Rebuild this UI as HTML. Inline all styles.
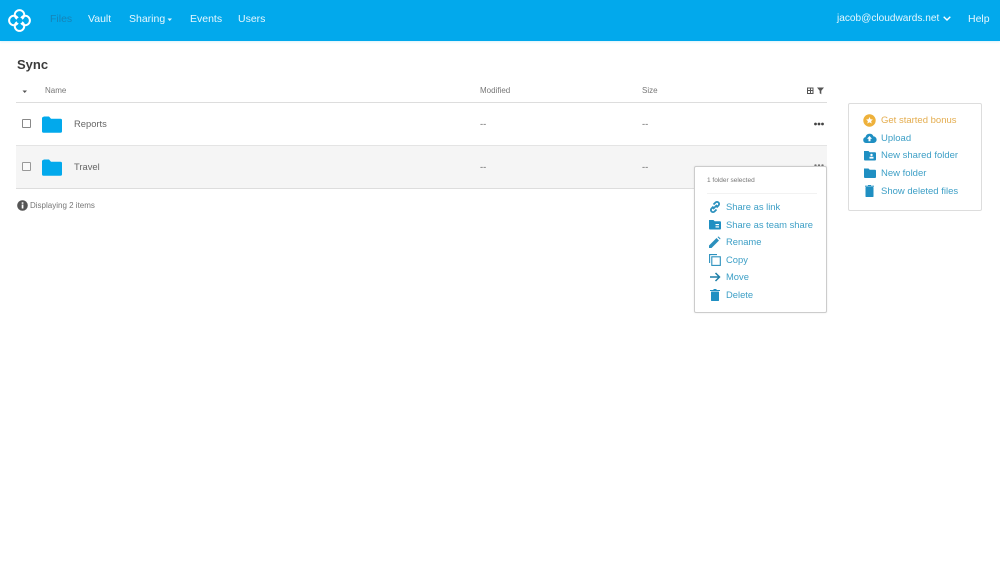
<!DOCTYPE html>
<html><head><meta charset="utf-8"><style>
html,body{margin:0;padding:0;background:#fff}
body{width:1000px;height:566px;overflow:hidden;position:relative;font-family:"Liberation Sans",sans-serif}
.t{position:absolute;white-space:nowrap;line-height:14px}
.b{position:absolute}
.nav{font-size:10.5px;color:#e6f7fe;top:12px}
.h{font-size:8px;color:#777;top:84px}
.g{font-size:9.4px;color:#666}
.l{font-size:9.5px;color:#3d9fc6}
svg{position:absolute;overflow:visible}
</style></head><body>
<div class="b" style="left:0;top:0;width:1000px;height:41px;background:#02a9ec;box-shadow:0 1px 2px rgba(2,169,236,.15)"></div>
<svg style="left:7px;top:8px" width="25" height="25" viewBox="0 0 25 25" fill="none" stroke="#fff" stroke-width="2"><circle cx="12.500" cy="6.800" r="4.700"/><circle cx="12.500" cy="18.200" r="4.700"/><circle cx="6.800" cy="12.500" r="4.700"/><circle cx="18.200" cy="12.500" r="4.700"/><circle cx="12.500" cy="12.500" r="3" fill="#02a9ec" stroke="none"/></svg>
<div class="t nav" style="left:50px;color:#1584b8">Files</div>
<div class="t nav" style="left:88px">Vault</div>
<div class="t nav" style="left:129px">Sharing</div>
<svg style="left:167px;top:18px" width="6" height="4"><path d="M0.500 0.500H5L2.700 3z" fill="#e6f7fe"/></svg>
<div class="t nav" style="left:190px">Events</div>
<div class="t nav" style="left:238px">Users</div>
<div class="t nav" style="left:837px;font-size:10.100px">jacob@cloudwards.net</div>
<svg style="left:943px;top:16px" width="8" height="6" fill="none" stroke="#fff" stroke-width="1.400"><path d="M0.700 0.800L4 4L7.300 0.800"/></svg>
<div class="t nav" style="left:968px">Help</div>

<div class="t" style="left:17px;top:57px;font-size:13px;font-weight:bold;color:#3c3c3c;line-height:15px">Sync</div>
<svg style="left:22px;top:90px" width="6" height="4"><path d="M0.500 0.500H5L2.700 3z" fill="#555"/></svg>
<div class="t h" style="left:45px">Name</div>
<div class="t h" style="left:480px">Modified</div>
<div class="t h" style="left:642px">Size</div>
<svg style="left:807px;top:87px" width="18" height="8"><path d="M0 0.500h6.500v6.500h-6.500z M1 1.500v1.500h2v-1.500z M4 1.500v1.500h1.500v-1.500z M1 4v2h2v-2z M4 4v2h1.500v-2z" fill="#555" fill-rule="evenodd"/><path d="M10 0.500h7l-2.700 3.200v3.500l-1.600-1v-2.500z" fill="#555"/></svg>
<div class="b" style="left:16px;top:102px;width:811px;height:1px;background:#ddd"></div>

<div class="b" style="left:22px;top:119px;width:7px;height:7px;border:1px solid #888;border-radius:1px"></div>
<svg style="left:42px;top:116px" width="20" height="17"><path d="M1.500 0.500h5.500l2 2.300h9.500a1.500 1.500 0 0 1 1.500 1.500v11a1.500 1.500 0 0 1-1.500 1.500h-17a1.500 1.500 0 0 1-1.500-1.500v-13.500a1.500 1.500 0 0 1 1.500-.8z" fill="#02a9ec"/></svg>
<div class="t g" style="left:74px;top:117px">Reports</div>
<div class="t g" style="left:480px;top:117px">--</div>
<div class="t g" style="left:642px;top:117px">--</div>
<svg style="left:814px;top:122px" width="10" height="4" fill="#444"><circle cx="1.500" cy="2" r="1.400"/><circle cx="5" cy="2" r="1.400"/><circle cx="8.500" cy="2" r="1.400"/></svg>
<div class="b" style="left:16px;top:145px;width:811px;height:42px;background:#f5f5f5;border-top:1px solid #e4e4e4;border-bottom:1px solid #ddd"></div>

<div class="b" style="left:22px;top:162px;width:7px;height:7px;border:1px solid #999;border-radius:1px;background:#fafafa"></div>
<svg style="left:42px;top:158.500px" width="20" height="17"><path d="M1.500 0.500h5.500l2 2.300h9.500a1.500 1.500 0 0 1 1.500 1.500v11a1.500 1.500 0 0 1-1.500 1.500h-17a1.500 1.500 0 0 1-1.500-1.500v-13.500a1.500 1.500 0 0 1 1.500-.8z" fill="#02a9ec"/></svg>
<div class="t g" style="left:74px;top:159.500px">Travel</div>
<div class="t g" style="left:480px;top:159.500px">--</div>
<div class="t g" style="left:642px;top:159.500px">--</div>

<svg style="left:17px;top:200px" width="11" height="11"><circle cx="5.500" cy="5.500" r="5.300" fill="#555"/><rect x="4.700" y="4.500" width="1.700" height="4" fill="#fff"/><rect x="4.700" y="2.300" width="1.700" height="1.500" fill="#fff"/></svg>
<div class="t" style="left:30px;top:199px;font-size:8px;color:#777">Displaying 2 items</div>

<svg style="left:814px;top:164px" width="10" height="3" fill="#777"><circle cx="1.500" cy="1.500" r="1.200"/><circle cx="5" cy="1.500" r="1.200"/><circle cx="8.500" cy="1.500" r="1.200"/></svg>
<div class="b" style="left:694px;top:166px;width:131px;height:145px;background:#fff;border:1px solid #ccc;border-radius:2px;box-shadow:0 0 2px rgba(0,0,0,.08)"></div>
<div class="t" style="left:707px;top:174px;font-size:6.500px;color:#777">1 folder selected</div>
<div class="b" style="left:707px;top:193px;width:110px;height:1px;background:#f2f2f2"></div>

<svg style="left:709px;top:201px" width="12" height="12" fill="none" stroke="#2b90bd" stroke-width="1.800"><path d="M4 8l4-4M4.500 5.500l-2 2a2 2 0 0 0 3 3l2-2M7.500 6.500l2-2a2 2 0 0 0-3-3l-2 2"/></svg>
<div class="t l" style="left:726px;top:200px;font-size:9.400px">Share as link</div>
<svg style="left:709px;top:219px" width="12" height="11"><path d="M0 1h4.500l1.200 1.300h5.300a1 1 0 0 1 1 1v6.200a1 1 0 0 1-1 1h-10a1 1 0 0 1-1-1z" fill="#1f8fc2"/><rect x="6.500" y="5" width="3.500" height="1.200" fill="#fff"/><rect x="6.500" y="7.300" width="3.500" height="1.200" fill="#fff"/></svg>
<div class="t l" style="left:726px;top:218px;font-size:9.400px">Share as team share</div>
<svg style="left:709px;top:237px" width="12" height="11"><path d="M0 11v-2.500l7.500-7.500 2.500 2.500-7.500 7.500z M8.500 0l1-.5 2 2-.5 1z" fill="#2b90bd"/></svg>
<div class="t l" style="left:726px;top:235px;font-size:9.400px">Rename</div>
<svg style="left:709px;top:254px" width="12" height="12" fill="none" stroke="#2b90bd" stroke-width="1.100"><path d="M.6 9V.6H8"/><rect x="2.800" y="2.800" width="8.500" height="8.600"/></svg>
<div class="t l" style="left:726px;top:252.500px;font-size:9.400px">Copy</div>
<svg style="left:710px;top:272px" width="11" height="10" fill="none" stroke="#1f7fa8" stroke-width="1.500"><path d="M0 5h9M5.500 1l4 4-4 4"/></svg>
<div class="t l" style="left:726px;top:270px;font-size:9.400px">Move</div>
<svg style="left:710px;top:289px" width="10" height="12" fill="#1f8fc2"><rect x="1" y="2.500" width="8" height="9.500" rx=".6"/><rect y="1" width="10" height="1"/><rect x="3.500" width="3" height="1"/></svg>
<div class="t l" style="left:726px;top:288px;font-size:9.400px">Delete</div>

<div class="b" style="left:848px;top:103px;width:132px;height:106px;background:#fff;border:1px solid #ddd;border-radius:2px"></div>
<svg style="left:863px;top:114px" width="13" height="13"><circle cx="6.500" cy="6.500" r="6.200" fill="#eeb13b"/><path d="M6.500 3l1 2.300 2.400.2-1.800 1.600.6 2.400-2.200-1.300-2.200 1.300.6-2.400-1.800-1.600 2.400-.2z" fill="#fff"/></svg>
<div class="t l" style="left:881px;top:114px;color:#e4ad4f">Get started bonus</div>
<svg style="left:863px;top:133px" width="13" height="10"><path d="M3 10a3 3 0 0 1-.5-5.900 4.200 4.200 0 0 1 8-.7 3.300 3.300 0 0 1-.3 6.600z" fill="#1f8fc2"/><path d="M6.500 3l2.500 2.800h-1.500v2.500h-2v-2.500h-1.500z" fill="#fff"/></svg>
<div class="t l" style="left:881px;top:131.500px">Upload</div>
<svg style="left:864px;top:150px" width="12" height="11"><path d="M0 1h4.500l1.200 1.300h5.300a1 1 0 0 1 1 1v6.200a1 1 0 0 1-1 1h-10a1 1 0 0 1-1-1z" fill="#1f8fc2"/><circle cx="7.500" cy="5" r="1.200" fill="#fff"/><rect x="5.500" y="6.800" width="4" height="1.800" fill="#fff"/></svg>
<div class="t l" style="left:881px;top:149px">New shared folder</div>
<svg style="left:864px;top:168px" width="12" height="10"><path d="M0 .5h4.500l1.200 1.300h5.300a1 1 0 0 1 1 1v6.200a1 1 0 0 1-1 1h-10a1 1 0 0 1-1-1z" fill="#1f8fc2"/></svg>
<div class="t l" style="left:881px;top:166.500px">New folder</div>
<svg style="left:865px;top:185px" width="9" height="12" fill="#1f8fc2"><rect x=".5" y="2" width="8" height="10" rx=".6"/><rect y=".7" width="9" height="1"/><rect x="3" width="3" height="1"/></svg>
<div class="t l" style="left:881px;top:184.500px">Show deleted files</div>
</body></html>
